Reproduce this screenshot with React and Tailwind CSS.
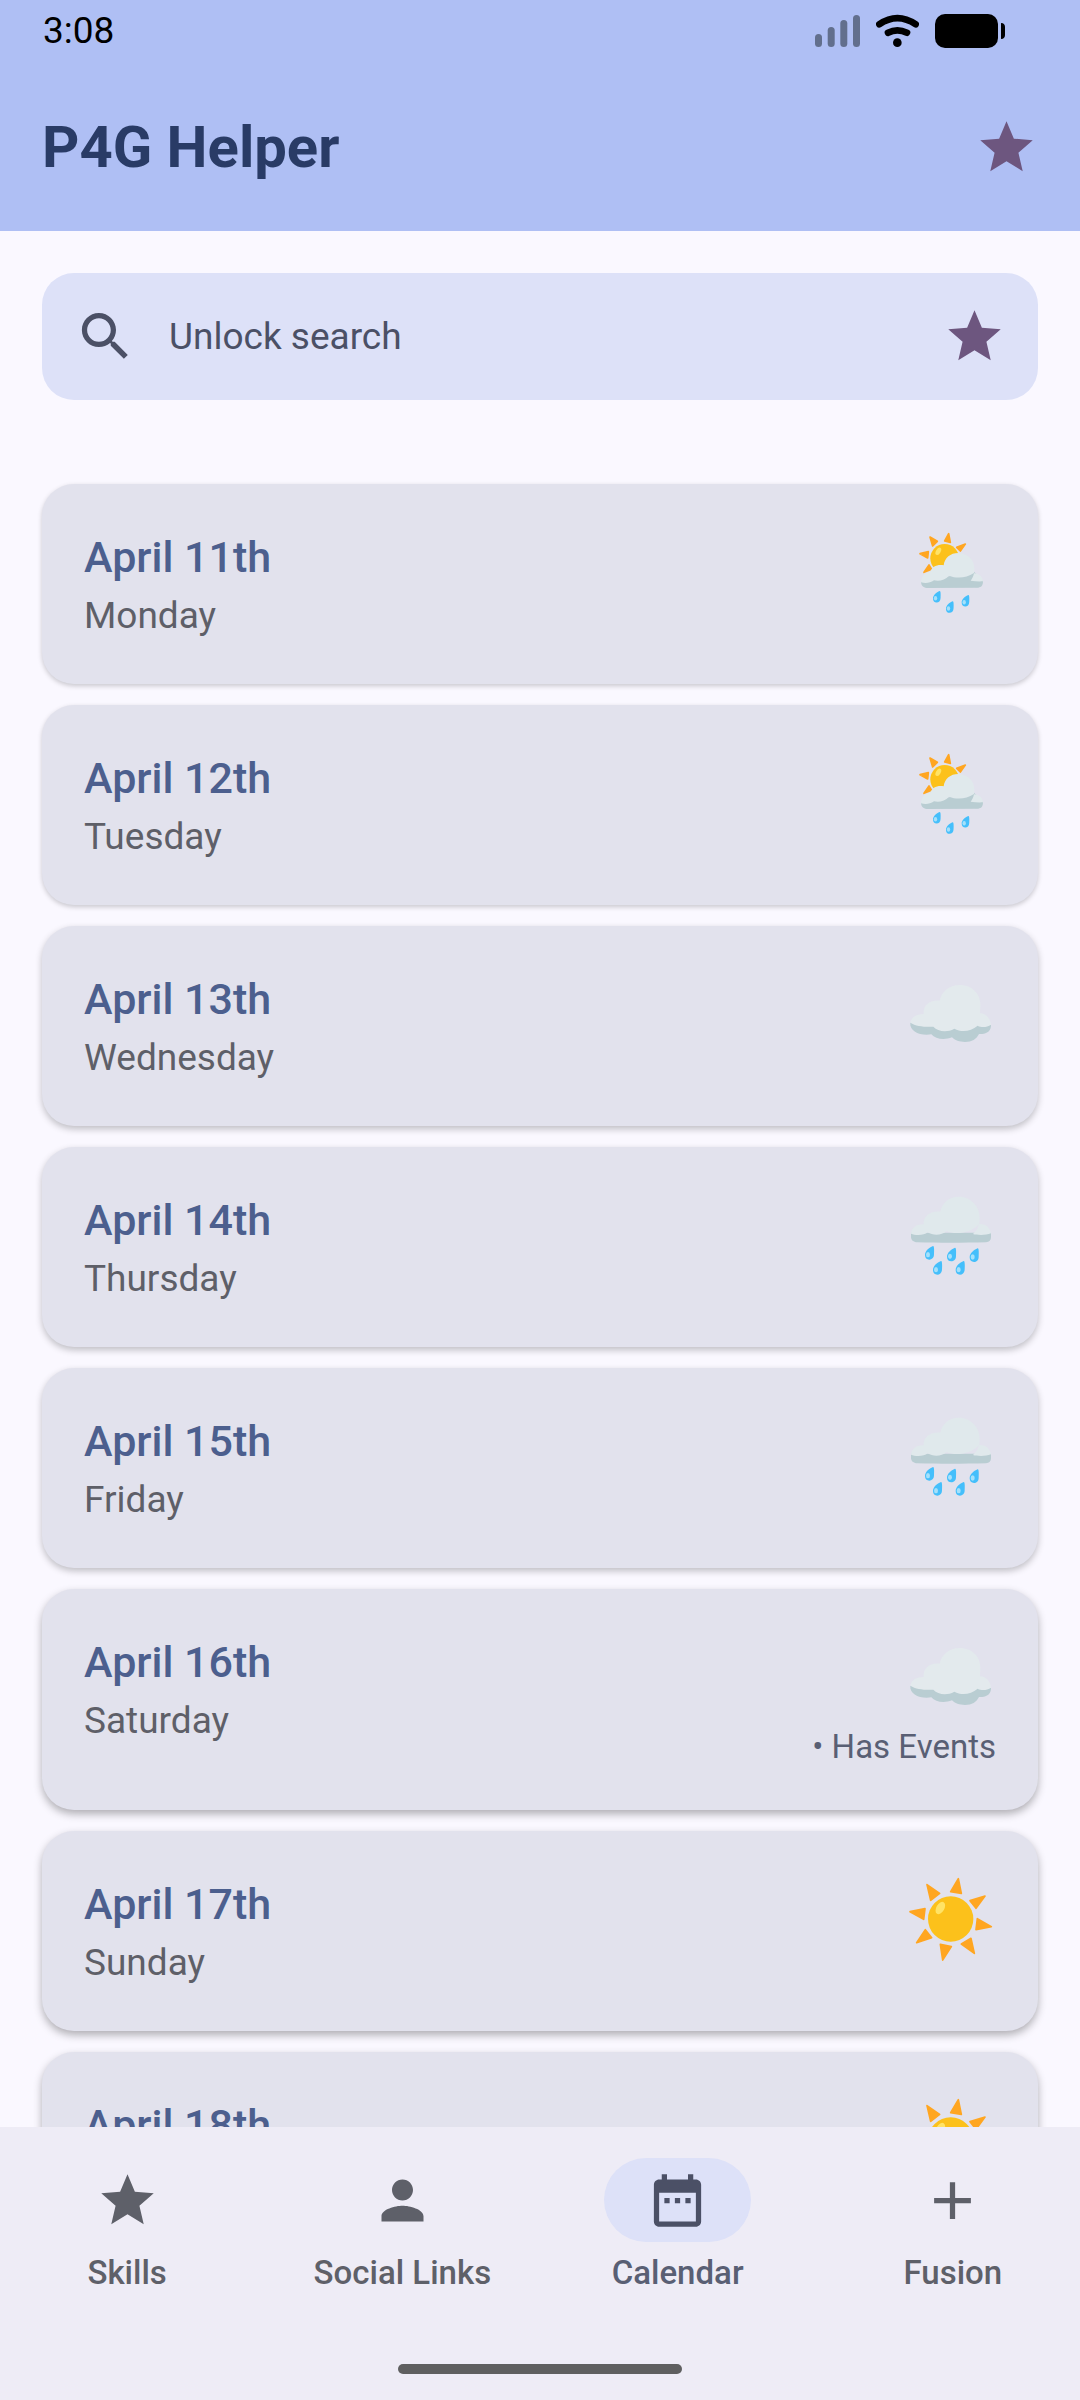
import React from 'react';
import clsx from 'clsx';

const DAYS = [
    { date: 'April 11th', weekday: 'Monday', weather: 'sunRain', shadow: 'shadow-[0_2px_5px_rgba(0,0,0,0.20)]' },
    { date: 'April 12th', weekday: 'Tuesday', weather: 'sunRain', shadow: 'shadow-[0_2px_5px_rgba(0,0,0,0.20)]' },
    { date: 'April 13th', weekday: 'Wednesday', weather: 'cloud', shadow: 'shadow-[0_3px_7px_rgba(0,0,0,0.24)]' },
    { date: 'April 14th', weekday: 'Thursday', weather: 'rain', shadow: 'shadow-[0_3px_7px_rgba(0,0,0,0.24)]' },
    { date: 'April 15th', weekday: 'Friday', weather: 'rain', shadow: 'shadow-[0_3px_7px_rgba(0,0,0,0.24)]' },
    { date: 'April 16th', weekday: 'Saturday', weather: 'cloud', hasEvents: true, shadow: 'shadow-[0_4px_8px_rgba(0,0,0,0.30)]' },
    { date: 'April 17th', weekday: 'Sunday', weather: 'sun', shadow: 'shadow-[0_4px_8px_rgba(0,0,0,0.30)]' },
    { date: 'April 18th', weekday: 'Monday', weather: 'sun', shadow: 'shadow-[0_4px_8px_rgba(0,0,0,0.30)]' },
];

const ICONS = {
    star: 'M12 17.27L18.18 21l-1.64-7.03L22 9.24l-7.19-.61L12 2 9.19 8.63 2 9.24l5.46 4.73L5.82 21z',
    search: 'M15.5 14h-.79l-.28-.27C15.41 12.59 16 11.11 16 9.5 16 5.91 13.09 3 9.5 3S3 5.91 3 9.5 5.91 16 9.5 16c1.61 0 3.09-.59 4.23-1.57l.27.28v.79l5 4.99L20.49 19l-4.99-5zm-6 0C7.01 14 5 11.99 5 9.5S7.01 5 9.5 5 14 7.01 14 9.5 11.99 14 9.5 14z',
    person: 'M12 12c2.21 0 4-1.79 4-4s-1.79-4-4-4-4 1.79-4 4 1.79 4 4 4zm0 2c-2.67 0-8 1.34-8 4v2h16v-2c0-2.66-5.33-4-8-4z',
    calendar: 'M9 11H7v2h2v-2zm4 0h-2v2h2v-2zm4 0h-2v2h2v-2zm2-7h-1V2h-2v2H8V2H6v2H5c-1.11 0-1.99.9-1.99 2L3 20c0 1.1.89 2 2 2h14c1.1 0 2-.9 2-2V6c0-1.1-.9-2-2-2zm0 16H5V9h14v11z',
    add: 'M19 13h-6v6h-2v-6H5v-2h6V5h2v6h6v2z',
};

const TABS = [
    { label: 'Skills', icon: 'star' },
    { label: 'Social Links', icon: 'person' },
    { label: 'Calendar', icon: 'calendar', active: true },
    { label: 'Fusion', icon: 'add' },
];

const Icon = ({ name, className }) => (
    <svg viewBox="0 0 24 24" fill="currentColor" aria-hidden="true" className={clsx('size-[63px] shrink-0', className)}>
        <path d={ICONS[name]} />
    </svg>
);

const Drop = ({ x, y, scale = 1 }) => (
    <g transform={`translate(${x} ${y}) scale(${scale})`}>
        <path d="M24 0C27-1 28 8 27 25C27 36 20 41 13 41C5 41 0 36 0 27C0 15 12 5 24 0Z" fill="#45bffb" />
        <ellipse cx="9" cy="26" rx="6" ry="8" fill="#a5e1fb" />
    </g>
);

const Sun = () => (
    <svg viewBox="0 0 270 282" className="w-[90px] h-[94px]" role="img" aria-label="Sunny">
        <g fill="#ffa621" stroke="#ffa621" strokeWidth="5" strokeLinejoin="round">
            <path d="M157 17L166 61L134 56Z" />
            <path d="M237 69L210 106L192 83Z" />
            <path d="M256 161L210 170L214 137Z" />
            <path d="M205 241L166 213L195 196Z" />
            <path d="M110 261L103 214L136 221Z" />
            <path d="M32 209L58 170L77 194Z" />
            <path d="M12 116L57 107L53 139Z" />
            <path d="M63 35L101 61L74 82Z" />
        </g>
        <circle cx="134" cy="138" r="68" fill="#fcc11b" />
        <ellipse cx="103" cy="105" rx="12" ry="20" fill="#ffe366" transform="rotate(30 103 105)" />
    </svg>
);

const Cloud = () => (
    <svg viewBox="138 84 270 282" className="w-[90px] h-[94px]" role="img" aria-label="Cloudy">
        <path
            d="M151 248L393 254C393 270 386 282 357 282C349 298 336 306 315 306C299 306 284 301 276 292C254 301 226 298 214 283C180 288 148 274 151 248Z"
            fill="#b9cdd2"
        />
        <path
            d="M151 248C155 230 170 222 191 222C188 198 207 179 239 182C244 156 267 135 299 135C338 135 364 164 361 200L360 220C379 220 391 236 393 254C381 262 365 264 353 257C333 274 305 278 283 266C259 279 234 274 220 260C192 261 168 259 151 248Z"
            fill="#e3eaed"
        />
    </svg>
);

const Rain = () => (
    <svg viewBox="138 747 270 282" className="w-[90px] h-[94px]" role="img" aria-label="Rainy">
        <path d="M153 878H393V891C393 901 388 906 378 907C310 909 235 909 172 907C160 906 153 900 153 890Z" fill="#b9cdd2" />
        <path
            d="M153 881C156 862 170 852 191 853C188 830 212 811 241 815C246 789 267 770 295 770C334 770 361 802 359 836L358 852C334 877 290 887 260 873C243 888 218 886 203 877C193 886 167 887 153 881Z"
            fill="#e0e9ec"
        />
        <path d="M357 852C378 851 391 864 393 880C378 886 353 886 339 882C350 872 355 862 357 852Z" fill="#e0e9ec" />
        <Drop x={195} y={918} />
        <Drop x={261} y={923} />
        <Drop x={329} y={925} />
        <Drop x={219} y={963} />
        <Drop x={287} y={963} />
    </svg>
);

const SunRain = () => (
    <svg viewBox="138 168 270 282" className="w-[90px] h-[94px]" role="img" aria-label="Sun and rain">
        <g fill="#ffa621" stroke="#ffa621" strokeWidth="5" strokeLinejoin="round">
            <path d="M266 191L271 217L254 213Z" />
            <path d="M316 222L301 243L290 232Z" />
            <path d="M210 201L232 214L218 228Z" />
            <path d="M180 251L205 245L203 264Z" />
            <path d="M207 285L215 298L192 307Z" />
        </g>
        <circle cx="254" cy="265" r="43" fill="#fcc11b" />
        <ellipse cx="235" cy="244" rx="7" ry="12" fill="#ffe366" transform="rotate(30 235 244)" />
        <path d="M183 334L342 305L369 334C369 345 365 352 355 353L200 354C189 353 183 347 183 334Z" fill="#b9cdd2" />
        <path
            d="M183 337C184 318 193 308 211 306C215 290 231 283 251 286C254 263 271 249 295 249C325 250 345 272 343 300L342 309C318 325 290 326 267 317C255 330 238 335 222 331C210 339 197 341 183 337Z"
            fill="#e0e9ec"
        />
        <path d="M342 310C358 311 367 320 369 334C357 335 345 334 332 332C337 326 340 319 342 310Z" fill="#e0e9ec" />
        <Drop x={219} y={363} scale={0.84} />
        <Drop x={258} y={394} scale={0.84} />
        <Drop x={305} y={375} scale={0.84} />
    </svg>
);

const WEATHER = { sun: Sun, cloud: Cloud, rain: Rain, sunRain: SunRain };

const StatusBar = () => (
    <div className="flex items-start justify-between pl-[43px] pr-[75px] h-[63px] text-black">
        <span className="text-[37px] leading-[62px]">3:08</span>
        <div className="flex items-center gap-4 pt-[14px]">
            <svg viewBox="0 0 45 34" className="w-[45px] h-[34px]" fill="#626f8d" aria-hidden="true">
                <rect x="0" y="20" width="7" height="13" rx="3.5" />
                <rect x="12.7" y="13" width="7" height="20" rx="3.5" />
                <rect x="25.3" y="6" width="7" height="27" rx="3.5" />
                <rect x="38" y="1" width="7" height="32" rx="3.5" />
            </svg>
            <svg viewBox="348 42 129 102" className="w-[43px] h-[34px]" fill="none" stroke="black" strokeWidth="20" strokeLinecap="round" aria-hidden="true">
                <path d="M358 73Q412 36 467 73" />
                <path d="M384 98Q412 84 441 98" />
                <circle cx="412" cy="128" r="13" fill="black" stroke="none" />
            </svg>
            <svg viewBox="0 0 70 34" className="w-[70px] h-[34px]" aria-hidden="true">
                <rect width="63" height="34" rx="10" />
                <path d="M66 9C69 9 70 11 70 13V21C70 23 69 25 66 25Z" />
            </svg>
        </div>
    </div>
);

const DayCard = ({ date, weekday, weather, hasEvents, shadow }) => {
    const Weather = WEATHER[weather];
    return (
        <li className={clsx('flex justify-between rounded-[32px] bg-[#e2e2ed] p-[42px]', shadow)}>
            <div>
                <h2 className="text-[43px] leading-[63px] font-medium text-[#4c5f8e]">{date}</h2>
                <p className="text-[37px] leading-[53px] text-[#5e5f68]">{weekday}</p>
            </div>
            <div className="flex flex-col items-end">
                <Weather />
                {hasEvents && <p className="text-[33px] leading-[43px] text-[#595f74]">• Has Events</p>}
            </div>
        </li>
    );
};

const App = () => {
    return (
        <div className="flex flex-col h-screen overflow-hidden bg-[#faf8ff] font-[Roboto,sans-serif]">
            <header className="shrink-0 bg-[#afbff4]">
                <StatusBar />
                <div className="flex items-center justify-between h-[168px] px-[42px]">
                    <h1 className="text-[58px] leading-[74px] font-bold text-[#293b66]">P4G Helper</h1>
                    <button type="button" aria-label="Premium">
                        <Icon name="star" className="text-[#6d567f]" />
                    </button>
                </div>
            </header>

            <main className="flex flex-col flex-1 min-h-0 overflow-hidden gap-[84px] px-[42px] pt-[42px]">
                <button type="button" className="flex items-center shrink-0 gap-8 h-[127px] px-8 rounded-[32px] bg-[#dde1f8] text-[#4b5066]">
                    <Icon name="search" />
                    <span className="flex-1 text-left text-[37px] leading-[53px]">Unlock search</span>
                    <Icon name="star" className="text-[#6d567f]" />
                </button>

                <ul className="flex flex-col gap-[21px]">
                    {DAYS.map((day) => (
                        <DayCard key={day.date} {...day} />
                    ))}
                </ul>
            </main>

            <nav className="shrink-0 bg-[#eeecf6]">
                <ul className="flex gap-[21px] pt-[31px]">
                    {TABS.map(({ label, icon, active }) => (
                        <li key={label} className="flex-1">
                            <a
                                href={`#${icon}`}
                                aria-current={active ? 'page' : undefined}
                                className={clsx('flex flex-col items-center gap-[10px]', active ? 'text-[#595f74]' : 'text-[#5e6069]')}
                            >
                                <span
                                    className={clsx(
                                        'flex items-center justify-center w-[147px] h-[84px] rounded-full',
                                        active && 'bg-[#dde1f8] text-[#4b5066]'
                                    )}
                                >
                                    <Icon name={icon} />
                                </span>
                                <span className="text-[33px] leading-[42px] font-medium">{label}</span>
                            </a>
                        </li>
                    ))}
                </ul>
                {/* Gesture bar */}
                <div className="mx-auto mt-[70px] mb-[26px] w-[284px] h-[10px] rounded-full bg-[#5f5f60]" />
            </nav>
        </div>
    );
};

export default App;
